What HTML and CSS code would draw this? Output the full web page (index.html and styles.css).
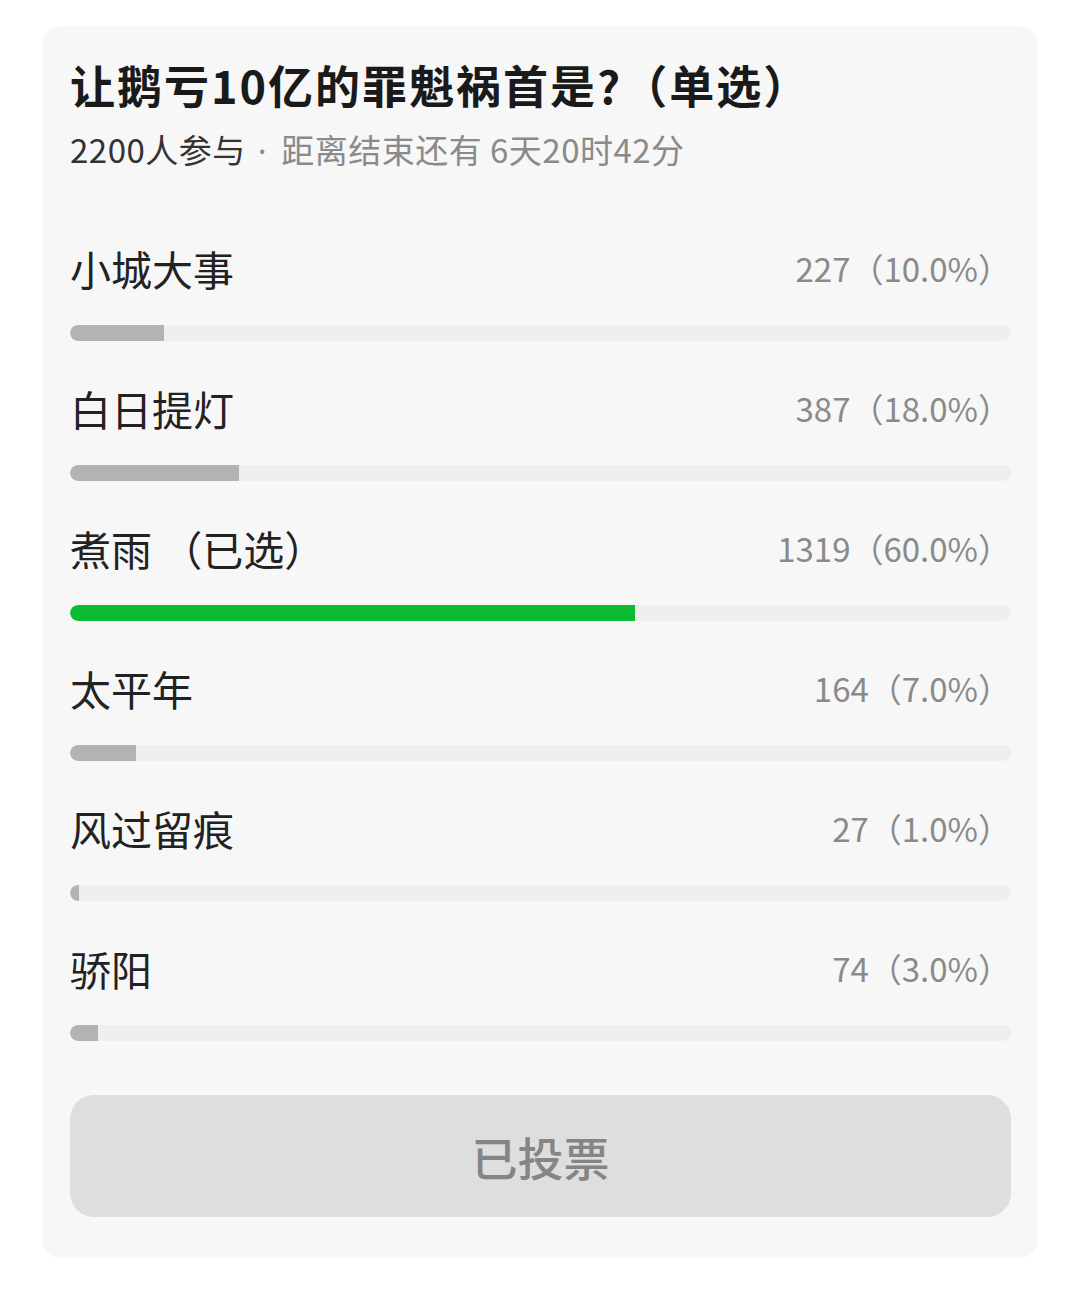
FILE: index.html
```html
<!DOCTYPE html>
<html lang="zh-CN">
<head>
    <meta charset="UTF-8">
    <meta name="viewport" content="width=device-width, initial-scale=1.0">
    <title>投票</title>
    <link rel="stylesheet" href="styles.css">
</head>
<body>
    <div class="poll-card">
        <h1 class="poll-title">让鹅亏10亿的罪魁祸首是?（单选）</h1>
        <p class="poll-meta"><span class="count">2200人参与</span><span class="dot">·</span>距离结束还有 6天20时42分</p>

        <ul class="options">
            <li class="option">
                <div class="option-head">
                    <span class="label">小城大事</span>
                    <span class="value">227（10.0%）</span>
                </div>
                <div class="track"><div class="fill" style="width: 10%"></div></div>
            </li>
            <li class="option">
                <div class="option-head">
                    <span class="label">白日提灯</span>
                    <span class="value">387（18.0%）</span>
                </div>
                <div class="track"><div class="fill" style="width: 18%"></div></div>
            </li>
            <li class="option selected">
                <div class="option-head">
                    <span class="label">煮雨 （已选）</span>
                    <span class="value">1319（60.0%）</span>
                </div>
                <div class="track"><div class="fill" style="width: 60%"></div></div>
            </li>
            <li class="option">
                <div class="option-head">
                    <span class="label">太平年</span>
                    <span class="value">164（7.0%）</span>
                </div>
                <div class="track"><div class="fill" style="width: 7%"></div></div>
            </li>
            <li class="option">
                <div class="option-head">
                    <span class="label">风过留痕</span>
                    <span class="value">27（1.0%）</span>
                </div>
                <div class="track"><div class="fill" style="width: 1%"></div></div>
            </li>
            <li class="option">
                <div class="option-head">
                    <span class="label">骄阳</span>
                    <span class="value">74（3.0%）</span>
                </div>
                <div class="track"><div class="fill" style="width: 3%"></div></div>
            </li>
        </ul>

        <button class="vote-btn" disabled>已投票</button>
    </div>
</body>
</html>
```

FILE: styles.css
```css
body {
    margin: 0;
    padding: 26px 42px 0;
    background-color: #fff;
    font-family: "Noto Sans CJK SC", "Noto Sans", sans-serif;
    color: #222;
}

.poll-card {
    background-color: #f7f7f7;
    border-radius: 20px;
    padding: 27px 27px 42px 28px;
    height: 1232px;
    box-sizing: border-box;
}

.poll-title {
    margin: 0;
    font-size: 45px;
    font-weight: 700;
    line-height: 64px;
    letter-spacing: 2px;
    color: #1a1a1a;
}

.poll-meta {
    margin: 10px 0 0;
    font-size: 33px;
    line-height: 44px;
    letter-spacing: 0.5px;
    color: #8a8a8a;
}

.poll-meta .count {
    color: #333;
}

.poll-meta .dot {
    font-family: "Noto Sans", sans-serif;
    padding: 0 14px 0 12px;
}

.options {
    list-style: none;
    margin: 65px 0 0;
    padding: 0;
}

.option {
    height: 140px;
}

.option-head {
    display: flex;
    justify-content: space-between;
    align-items: center;
    height: 60px;
}

.label {
    font-size: 41px;
    color: #222;
}

.value {
    font-size: 33px;
    color: #8a8a8a;
}

.track {
    margin-top: 27px;
    height: 16px;
    background-color: #efefef;
    border-radius: 8px;
    overflow: hidden;
}

.fill {
    height: 100%;
    background-color: #b3b3b3;
    border-radius: 8px 0 0 8px;
}

.selected .fill {
    background-color: #0cba34;
}

.vote-btn {
    display: block;
    width: 100%;
    height: 122px;
    margin-top: 17px;
    border: none;
    border-radius: 24px;
    background-color: #dedede;
    color: #858585;
    font-family: inherit;
    font-size: 46px;
    font-weight: 500;
}
```
